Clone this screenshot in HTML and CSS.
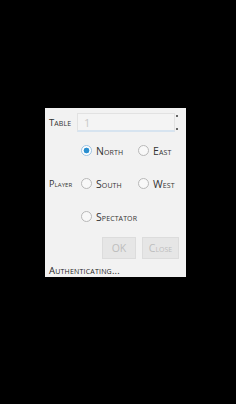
FILE: index.html
```html
<!DOCTYPE html>
<html>
<head>
<meta charset="utf-8">
<link rel="stylesheet" href="styles.css">
</head>
<body>
<div class="dialog">
  <div class="row table-row">
    <span class="label">Table</span>
    <div class="field"><span class="value">1</span></div>
    <div class="spinner"><span></span><span></span></div>
  </div>
  <div class="radios">
    <div class="rrow">
      <span class="label"></span>
      <label class="radio"><span class="dot checked"></span>North</label>
      <label class="radio"><span class="dot"></span>East</label>
    </div>
    <div class="rrow">
      <span class="label">Player</span>
      <label class="radio"><span class="dot"></span>South</label>
      <label class="radio"><span class="dot"></span>West</label>
    </div>
    <div class="rrow">
      <span class="label"></span>
      <label class="radio"><span class="dot"></span>Spectator</label>
    </div>
  </div>
  <div class="buttons">
    <button class="btn ok">OK</button>
    <button class="btn close">Close</button>
  </div>
  <div class="status">Authenticating...</div>
</div>
</body>
</html>
```
FILE: styles.css
```css
html, body {
  margin: 0;
  padding: 0;
  background: #000;
  height: 100%;
}
body {
  padding-top: 108px;
  padding-left: 45px;
  box-sizing: border-box;
  font-family: "Open Sans", "DejaVu Sans", sans-serif;
  font-variant: small-caps;
  color: #333;
  font-size: 10px;
}
.dialog {
  width: 141px;
  height: 169px;
  background: #f2f2f2;
  box-sizing: border-box;
  padding: 5px 0 0 4px;
  display: flex;
  flex-direction: column;
  overflow: hidden;
}
.row {
  display: flex;
  align-items: center;
}
.table-row {
  height: 19px;
}
.label {
  width: 28px;
  flex: none;
  font-size: 9.5px;
  letter-spacing: 0.1px;
}
.field {
  width: 98px;
  flex: none;
  height: 19px;
  box-sizing: border-box;
  border: 1px solid #e2e2e2;
  border-bottom: 2px solid #d7e4f0;
  background: #f4f4f4;
  display: flex;
  align-items: center;
  padding-left: 6px;
}
.value {
  color: #c8c8c8;
  font-size: 11px;
}
.spinner {
  width: 4px;
  flex: none;
  height: 19px;
  margin-left: 1px;
  display: flex;
  flex-direction: column;
  justify-content: space-between;
  padding: 2px 0;
  box-sizing: border-box;
}
.spinner span {
  width: 2px;
  height: 2px;
  background: #666;
}
.radios {
  display: flex;
  flex-direction: column;
  margin-top: 13px;
}
.rrow {
  display: flex;
  align-items: center;
  height: 11px;
  margin-bottom: 22px;
}
.rrow .label {
  width: 32px;
  font-size: 9px;
}
.radio {
  display: flex;
  align-items: center;
  width: 57px;
  flex: none;
  font-size: 10.5px;
  letter-spacing: 0.1px;
}
.dot {
  width: 11px;
  height: 11px;
  box-sizing: border-box;
  border-radius: 50%;
  border: 1px solid #b8b8b8;
  background: #f8f8f8;
  margin-right: 4px;
  flex: none;
}
.dot.checked {
  border-color: #9cc4e4;
  background: radial-gradient(circle, #2a8fd0 0 2.6px, #ffffff 3.2px);
}
.buttons {
  display: flex;
  margin-top: -7px;
  padding-left: 53px;
  gap: 6px;
}
.btn {
  height: 22px;
  flex: none;
  border: 1px solid #dcdcdc;
  background: #e6e6e6;
  color: #bdbdbd;
  font-family: inherit;
  font-variant: small-caps;
  font-size: 10.5px;
  padding: 0;
}
.btn.ok { width: 34px; }
.btn.close { width: 37px; }
.status {
  margin-top: 5px;
  font-size: 9.5px;
  color: #222;
  letter-spacing: 0.2px;
}
```
